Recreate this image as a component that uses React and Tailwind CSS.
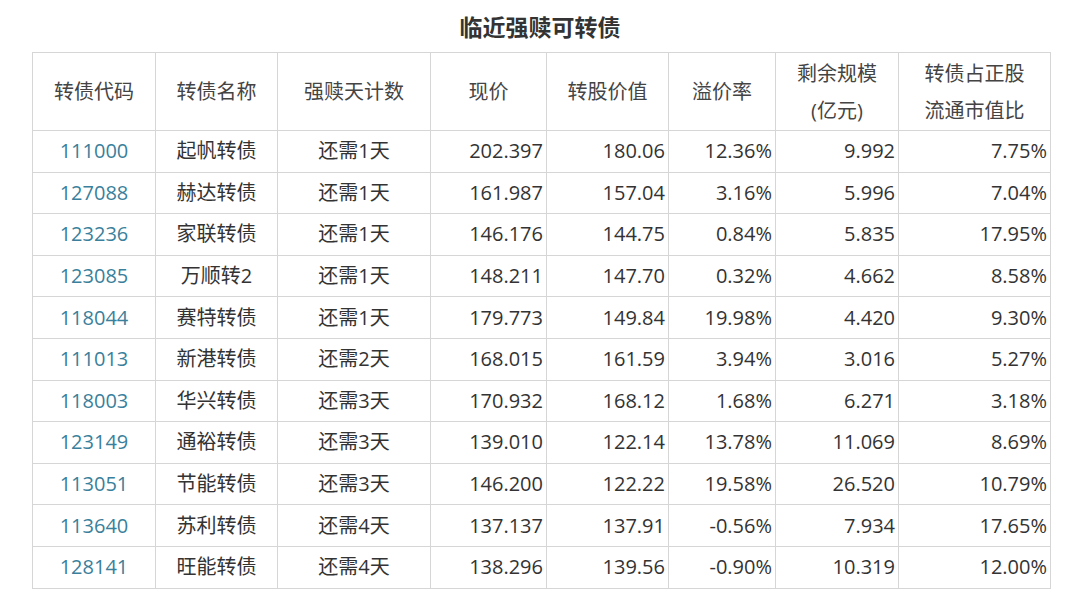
const rows = [
  ["111000", "起帆转债", "还需1天", "202.397", "180.06", "12.36%", "9.992", "7.75%"],
  ["127088", "赫达转债", "还需1天", "161.987", "157.04", "3.16%", "5.996", "7.04%"],
  ["123236", "家联转债", "还需1天", "146.176", "144.75", "0.84%", "5.835", "17.95%"],
  ["123085", "万顺转2", "还需1天", "148.211", "147.70", "0.32%", "4.662", "8.58%"],
  ["118044", "赛特转债", "还需1天", "179.773", "149.84", "19.98%", "4.420", "9.30%"],
  ["111013", "新港转债", "还需2天", "168.015", "161.59", "3.94%", "3.016", "5.27%"],
  ["118003", "华兴转债", "还需3天", "170.932", "168.12", "1.68%", "6.271", "3.18%"],
  ["123149", "通裕转债", "还需3天", "139.010", "122.14", "13.78%", "11.069", "8.69%"],
  ["113051", "节能转债", "还需3天", "146.200", "122.22", "19.58%", "26.520", "10.79%"],
  ["113640", "苏利转债", "还需4天", "137.137", "137.91", "-0.56%", "7.934", "17.65%"],
  ["128141", "旺能转债", "还需4天", "138.296", "139.56", "-0.90%", "10.319", "12.00%"],
];

const widths = ["w-[123px]", "w-[122px]", "w-[153px]", "w-[116px]", "w-[122px]", "w-[107px]", "w-[123px]", "w-[152px]"];

const App = () => {
  return (
    <div
      className="bg-white w-[1080px] h-[598px] text-[#333]"
      style={{ fontFamily: '"Open Sans", "Noto Sans CJK SC", sans-serif' }}
    >
      {/* Title */}
      <h1 className="h-[52px] flex items-center justify-center pt-[2px] text-[23px] font-bold text-[#333]">
        临近强赎可转债
      </h1>

      <table className="ml-[32px] border-collapse table-fixed text-[20px]">
        <colgroup>
          {widths.map((w, i) => (
            <col key={i} className={w} />
          ))}
        </colgroup>
        <thead>
          <tr className="h-[78px]">
            {[
              ["转债代码"],
              ["转债名称"],
              ["强赎天计数"],
              ["现价"],
              ["转股价值"],
              ["溢价率"],
              ["剩余规模", "(亿元)"],
              ["转债占正股", "流通市值比"],
            ].map((lines, i) => (
              <th
                key={i}
                className="border border-[#d6d6d6] font-normal text-center leading-[37px] p-0 text-[#444]"
              >
                {lines.map((l, j) => (
                  <div key={j}>{l}</div>
                ))}
              </th>
            ))}
          </tr>
        </thead>
        <tbody>
          {rows.map((r) => (
            <tr key={r[0]} className="h-[41.6px]">
              {r.map((c, i) => (
                <td
                  key={i}
                  className={`border border-[#d6d6d6] p-0 leading-none ${
                    i === 0
                      ? "text-center text-[#3a7f9b]"
                      : i < 3
                      ? "text-center"
                      : "text-right pr-[3px]"
                  }`}
                >
                  {c}
                </td>
              ))}
            </tr>
          ))}
        </tbody>
      </table>
    </div>
  );
};

export default App;
